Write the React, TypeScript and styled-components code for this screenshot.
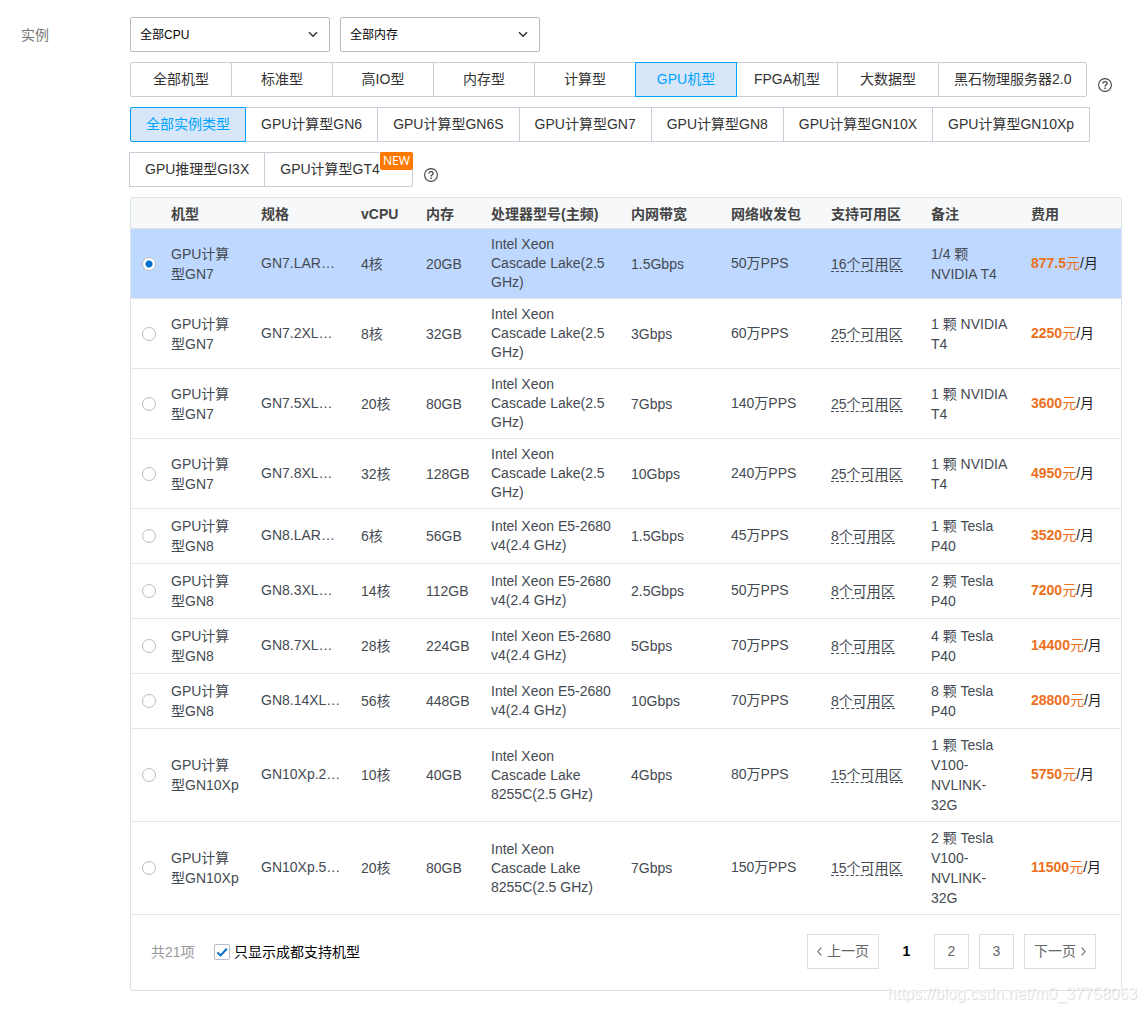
import React, { useState } from 'react';
import styled, { createGlobalStyle } from 'styled-components';

const GlobalStyle = createGlobalStyle`
  * { box-sizing: border-box; }
  body {
    margin: 0;
    background: #fff;
    color: #333;
    font: 14px/20px "Liberation Sans", "Noto Sans CJK SC", sans-serif;
  }
  button, input, select { font: inherit; margin: 0; }
`;

const Page = styled.main`
  position: relative;
  display: grid;
  grid-template-columns: 109px minmax(0, 1fr);
  padding: 17px 24px 21px 21px;
`;

const FieldName = styled.h2`
  margin: 0;
  font-size: 14px;
  font-weight: 400;
  line-height: 36px;
  color: #777;
`;

const Content = styled.div`
  display: flex;
  flex-direction: column;
  gap: 10px;
`;

const Filters = styled.div`
  display: flex;
  gap: 10px;
`;

const SelectBox = styled.div`
  position: relative;
  width: 200px;
`;

const Select = styled.select`
  display: block;
  width: 100%;
  height: 35px;
  padding: 0 30px 0 9px;
  appearance: none;
  border: 1px solid #b9bcc6;
  border-radius: 2px;
  background: #fff;
  color: #000;
  font-size: 12px;
`;

const SelectArrow = styled.svg`
  position: absolute;
  right: 12px;
  top: 14px;
  pointer-events: none;
`;

const Segments = styled.div`
  display: flex;
  flex-wrap: wrap;
  align-items: flex-end;
  row-gap: 10px;
`;

const Segment = styled.button<{ $active: boolean; $wide?: boolean; $tagged?: boolean }>`
  position: relative;
  z-index: ${(p) => (p.$active ? 1 : 0)};
  height: 35px;
  min-width: ${(p) => (p.$wide ? '102px' : '0')};
  padding: 0 ${(p) => (p.$tagged ? '32px' : '15px')} 2px 15px;
  margin-left: -1px;
  border: 1px solid ${(p) => (p.$active ? '#00a4ff' : '#cacdd8')};
  background: ${(p) => (p.$active ? '#d8e6f9' : '#fff')};
  color: ${(p) => (p.$active ? '#00a4ff' : '#333')};
  white-space: nowrap;
  cursor: pointer;

  &:first-child {
    margin-left: 0;
    border-radius: 2px 0 0 2px;
  }
  &:nth-last-child(2) {
    border-radius: 0 2px 2px 0;
  }
`;

const NewTag = styled.span`
  position: absolute;
  top: -1px;
  right: -1px;
  padding: 0 3px;
  border-radius: 2px;
  background: #ff7800;
  color: #fff;
  font: 12px/18px "Noto Sans", sans-serif;
`;

const HelpButton = styled.button`
  display: flex;
  width: 14px;
  height: 14px;
  margin: 0 0 5px 11px;
  padding: 0;
  border: 0;
  background: none;
  cursor: pointer;
`;

const Panel = styled.section`
  border: 1px solid #dce3e6;
  border-radius: 2px;
`;

const Table = styled.table`
  width: 100%;
  table-layout: fixed;
  border-collapse: separate;
  border-spacing: 0;
  color: #444a52;
`;

const HeadCell = styled.th<{ $width: number }>`
  width: ${(p) => p.$width}px;
  height: 31px;
  padding: 2px 0 0 10px;
  border-bottom: 1px solid #dce3e6;
  background: #f6f8fa;
  color: #444;
  text-align: left;
  white-space: nowrap;
`;

const Row = styled.tr<{ $selected: boolean }>`
  height: 55px;
  background: ${(p) => (p.$selected ? '#bfd8ff' : '#fff')};
  cursor: pointer;
`;

const Cell = styled.td`
  padding: 6px 10px;
  border-bottom: 1px solid #e2e7ee;
`;

const RadioCell = styled(Cell)`
  padding: 6px 5px 6px 11px;
`;

const SpecCell = styled(Cell)`
  padding-bottom: 8px;
  white-space: nowrap;
`;

const CpuCell = styled(Cell)`
  line-height: 19px;
`;

const Radio = styled.input`
  display: block;
  appearance: none;
  width: 14px;
  height: 14px;
  border: 1px solid #b9bcc6;
  border-radius: 50%;
  background: #fff;

  &:checked {
    background: radial-gradient(circle, #006eca 3px, #fff 4px);
  }
`;

const Zones = styled.span`
  display: inline-block;
  border-bottom: 1px dashed #444a52;
  line-height: 14px;
`;

const Price = styled.span`
  color: #ed7020;
`;

const PriceCell = styled(SpecCell)`
  color: #222;
`;

const Footer = styled.footer`
  display: flex;
  align-items: center;
  height: 75px;
  padding: 0 25px 2px 20px;
`;

const Total = styled.span`
  width: 63px;
  color: #999;
`;

const CheckLabel = styled.label`
  display: flex;
  align-items: center;
  gap: 4px;
  color: #000;
  cursor: pointer;
`;

const CheckBox = styled.span`
  position: relative;
  display: flex;
  width: 16px;
  height: 16px;
`;

const CheckInput = styled.input`
  appearance: none;
  width: 16px;
  height: 16px;
  border: 1px solid #b9bcc6;
  border-radius: 2px;
  background: #fff;

  &:not(:checked) + svg {
    display: none;
  }
`;

const Tick = styled.svg`
  position: absolute;
  inset: 0;
  pointer-events: none;
`;

const Pager = styled.nav`
  display: flex;
  gap: 10px;
  margin-left: auto;
`;

const PageButton = styled.button<{ $current?: boolean }>`
  display: flex;
  align-items: center;
  justify-content: center;
  gap: 5px;
  min-width: 35px;
  height: 35px;
  padding: 0 9px 1px;
  border: 1px solid ${(p) => (p.$current ? 'transparent' : '#ddd')};
  background: none;
  color: ${(p) => (p.$current ? '#000' : '#666')};
  font-weight: ${(p) => (p.$current ? 700 : 400)};
  cursor: pointer;
`;

const Watermark = styled.span`
  position: absolute;
  right: 9px;
  bottom: 8px;
  color: rgba(255, 255, 255, 0.8);
  font-size: 16px;
  text-shadow: 1px 1px 1px rgba(0, 0, 0, 0.16);
  pointer-events: none;
`;

const machineKinds = [
  '全部机型', '标准型', '高IO型', '内存型', '计算型', 'GPU机型', 'FPGA机型', '大数据型', '黑石物理服务器2.0',
];

const instanceKinds = [
  '全部实例类型', 'GPU计算型GN6', 'GPU计算型GN6S', 'GPU计算型GN7', 'GPU计算型GN8',
  'GPU计算型GN10X', 'GPU计算型GN10Xp', 'GPU推理型GI3X', 'GPU计算型GT4',
];

const columns: [string, number][] = [
  ['', 30], ['机型', 90], ['规格', 100], ['vCPU', 65], ['内存', 65], ['处理器型号(主频)', 140],
  ['内网带宽', 100], ['网络收发包', 100], ['支持可用区', 100], ['备注', 100], ['费用', 100],
];

const CASCADE = 'Intel Xeon Cascade Lake(2.5 GHz)';
const E5 = 'Intel Xeon E5-2680 v4(2.4 GHz)';
const CASCADE_8255C = 'Intel Xeon Cascade Lake 8255C(2.5 GHz)';

type Instance = {
  kind: string; spec: string; cores: number; memory: number; cpu: string;
  bandwidth: string; pps: number; zones: number; note: string; price: string;
};

const instances: Instance[] = [
  { kind: 'GN7', spec: 'GN7.LAR…', cores: 4, memory: 20, cpu: CASCADE, bandwidth: '1.5', pps: 50, zones: 16, note: '1/4 颗 NVIDIA T4', price: '877.5' },
  { kind: 'GN7', spec: 'GN7.2XL…', cores: 8, memory: 32, cpu: CASCADE, bandwidth: '3', pps: 60, zones: 25, note: '1 颗 NVIDIA T4', price: '2250' },
  { kind: 'GN7', spec: 'GN7.5XL…', cores: 20, memory: 80, cpu: CASCADE, bandwidth: '7', pps: 140, zones: 25, note: '1 颗 NVIDIA T4', price: '3600' },
  { kind: 'GN7', spec: 'GN7.8XL…', cores: 32, memory: 128, cpu: CASCADE, bandwidth: '10', pps: 240, zones: 25, note: '1 颗 NVIDIA T4', price: '4950' },
  { kind: 'GN8', spec: 'GN8.LAR…', cores: 6, memory: 56, cpu: E5, bandwidth: '1.5', pps: 45, zones: 8, note: '1 颗 Tesla P40', price: '3520' },
  { kind: 'GN8', spec: 'GN8.3XL…', cores: 14, memory: 112, cpu: E5, bandwidth: '2.5', pps: 50, zones: 8, note: '2 颗 Tesla P40', price: '7200' },
  { kind: 'GN8', spec: 'GN8.7XL…', cores: 28, memory: 224, cpu: E5, bandwidth: '5', pps: 70, zones: 8, note: '4 颗 Tesla P40', price: '14400' },
  { kind: 'GN8', spec: 'GN8.14XL…', cores: 56, memory: 448, cpu: E5, bandwidth: '10', pps: 70, zones: 8, note: '8 颗 Tesla P40', price: '28800' },
  { kind: 'GN10Xp', spec: 'GN10Xp.2…', cores: 10, memory: 40, cpu: CASCADE_8255C, bandwidth: '4', pps: 80, zones: 15, note: '1 颗 Tesla V100-NVLINK-32G', price: '5750' },
  { kind: 'GN10Xp', spec: 'GN10Xp.5…', cores: 20, memory: 80, cpu: CASCADE_8255C, bandwidth: '7', pps: 150, zones: 15, note: '2 颗 Tesla V100-NVLINK-32G', price: '11500' },
];

function Help() {
  return (
    <HelpButton type="button" aria-label="帮助">
      <svg width="14" height="14" viewBox="0 0 14 14" fill="none" stroke="#444">
        <circle cx="7" cy="7" r="6.4" strokeWidth="1.1" />
        <path d="M4.9 5.6C4.9 4.3 5.8 3.6 7 3.6s2.1.7 2.1 1.8C9.1 6.8 7.1 6.9 7.1 8.6" strokeWidth="1.3" />
        <path d="M7.1 9.6v1.4" strokeWidth="1.4" />
      </svg>
    </HelpButton>
  );
}

function DropDown({ name, option }: { name: string; option: string }) {
  return (
    <SelectBox>
      <Select aria-label={name}>
        <option>{option}</option>
      </Select>
      <SelectArrow width="10" height="7" viewBox="0 0 10 7" fill="none" stroke="#333" strokeWidth="1.5">
        <path d="M1 1.2 5 5.2 9 1.2" />
      </SelectArrow>
    </SelectBox>
  );
}

function Chevron({ d }: { d: string }) {
  return (
    <svg width="5" height="9" viewBox="0 0 5 9" fill="none" stroke="#666" strokeWidth="1.1">
      <path d={d} />
    </svg>
  );
}

export default function App() {
  const [machine, setMachine] = useState('GPU机型');
  const [kind, setKind] = useState('全部实例类型');
  const [selected, setSelected] = useState(0);
  const [page, setPage] = useState(1);

  return (
    <>
      <GlobalStyle />
      <Page>
        <FieldName>实例</FieldName>
        <Content>
          <Filters>
            <DropDown name="CPU" option="全部CPU" />
            <DropDown name="内存" option="全部内存" />
          </Filters>
          <Segments>
            {machineKinds.map((m) => (
              <Segment key={m} type="button" $wide $active={m === machine} onClick={() => setMachine(m)}>
                {m}
              </Segment>
            ))}
            <Help />
          </Segments>
          <Segments>
            {instanceKinds.map((k) => (
              <Segment
                key={k}
                type="button"
                $active={k === kind}
                $tagged={k.endsWith('GT4')}
                onClick={() => setKind(k)}
              >
                {k}
                {k.endsWith('GT4') && <NewTag>NEW</NewTag>}
              </Segment>
            ))}
            <Help />
          </Segments>
          <Panel>
            <Table>
              <thead>
                <tr>
                  {columns.map(([title, width]) => (
                    <HeadCell key={title} scope="col" $width={width}>{title}</HeadCell>
                  ))}
                </tr>
              </thead>
              <tbody>
                {instances.map((it, i) => (
                  <Row key={it.spec} $selected={i === selected} onClick={() => setSelected(i)}>
                    <RadioCell>
                      <Radio
                        type="radio"
                        name="instance"
                        aria-label={it.spec}
                        checked={i === selected}
                        onChange={() => setSelected(i)}
                      />
                    </RadioCell>
                    <Cell>{`GPU计算型${it.kind}`}</Cell>
                    <SpecCell>{it.spec}</SpecCell>
                    <Cell>{`${it.cores}核`}</Cell>
                    <Cell>{`${it.memory}GB`}</Cell>
                    <CpuCell>{it.cpu}</CpuCell>
                    <Cell>{`${it.bandwidth}Gbps`}</Cell>
                    <SpecCell>{`${it.pps}万PPS`}</SpecCell>
                    <Cell><Zones>{`${it.zones}个可用区`}</Zones></Cell>
                    <Cell>{it.note}</Cell>
                    <PriceCell>
                      <Price><b>{it.price}</b>元</Price>/月
                    </PriceCell>
                  </Row>
                ))}
              </tbody>
            </Table>
            <Footer>
              <Total>共21项</Total>
              <CheckLabel>
                <CheckBox>
                  <CheckInput type="checkbox" defaultChecked />
                  <Tick width="16" height="16" viewBox="0 0 16 16" fill="none" stroke="#006eca" strokeWidth="2">
                    <path d="M3.4 8.4 6.6 11.4 12.8 4.8" />
                  </Tick>
                </CheckBox>
                只显示成都支持机型
              </CheckLabel>
              <Pager aria-label="分页">
                <PageButton type="button" onClick={() => setPage(Math.max(1, page - 1))}>
                  <Chevron d="M4.4.6.9 4.5l3.5 3.9" />
                  上一页
                </PageButton>
                {[1, 2, 3].map((n) => (
                  <PageButton key={n} type="button" $current={n === page} onClick={() => setPage(n)}>
                    {n}
                  </PageButton>
                ))}
                <PageButton type="button" onClick={() => setPage(Math.min(3, page + 1))}>
                  下一页
                  <Chevron d="M.6.6 4.1 4.5.6 8.4" />
                </PageButton>
              </Pager>
            </Footer>
          </Panel>
        </Content>
        <Watermark>https://blog.csdn.net/m0_37758063</Watermark>
      </Page>
    </>
  );
}
